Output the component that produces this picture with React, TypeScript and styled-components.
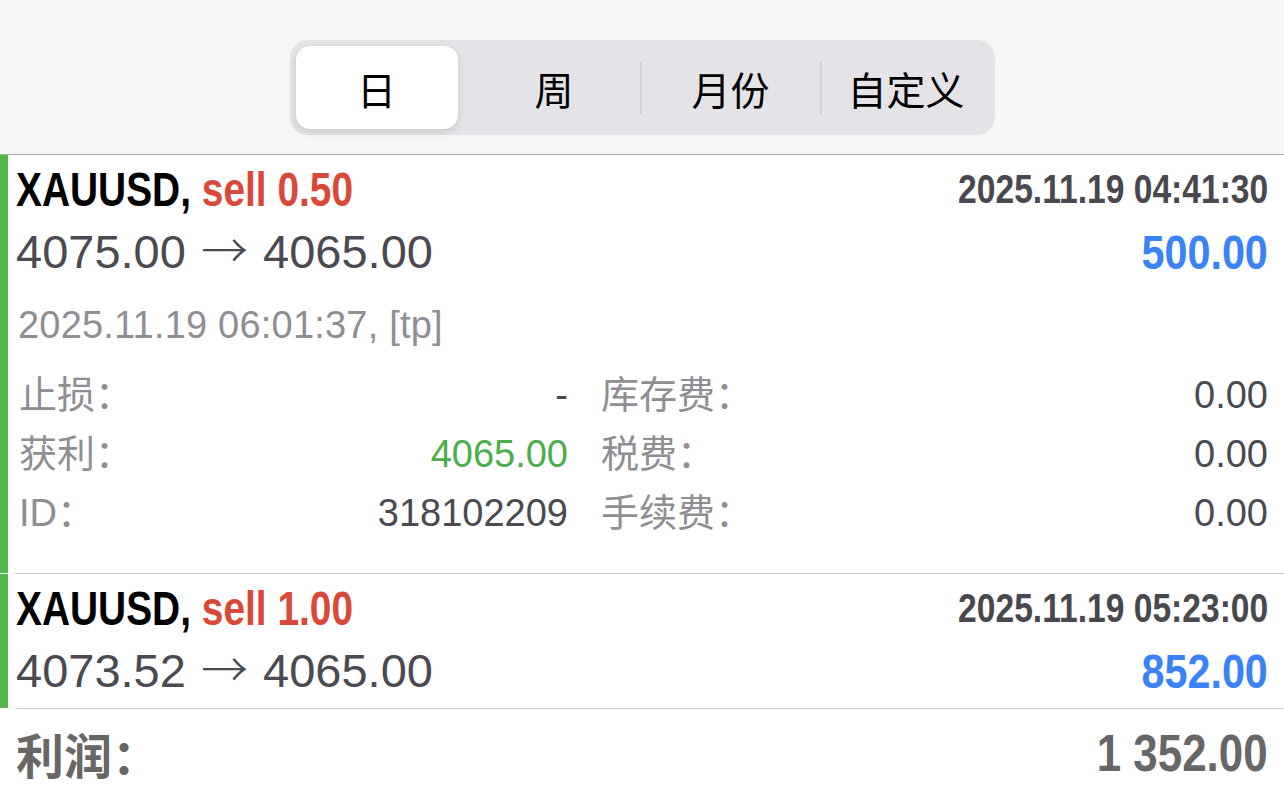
import React from "react";
import styled, { createGlobalStyle } from "styled-components";

const GlobalStyle = createGlobalStyle`
  html, body { margin: 0; padding: 0; background: #ffffff; }
  body {
    font-family: "Liberation Sans", "Noto Sans CJK SC", sans-serif;
    -webkit-font-smoothing: antialiased;
  }
  * { box-sizing: border-box; }
`;

const Page = styled.div`
  width: 1284px;
  height: 797px;
  overflow: hidden;
  background: #ffffff;
`;

const Header = styled.header`
  height: 155px;
  background: #f6f6f6;
  border-bottom: 1px solid #a9a9ab;
  display: flex;
  justify-content: center;
  padding-top: 40px;
`;

const Segmented = styled.div`
  display: flex;
  align-items: center;
  width: 705px;
  height: 95px;
  padding: 6px;
  border-radius: 18px;
  background: #e4e4e8;
`;

const Segment = styled.div<{ $w: number; $active?: boolean; $divider?: boolean }>`
  display: flex;
  align-items: center;
  justify-content: center;
  flex: none;
  width: ${(p) => p.$w}px;
  margin-right: ${(p) => (p.$active ? "11px" : "0")};
  height: ${(p) => (p.$active ? "83px" : "52px")};
  border-left: ${(p) => (p.$divider ? "2px solid #d2d2d6" : "none")};
  border-radius: ${(p) => (p.$active ? "14px" : "0")};
  background: ${(p) => (p.$active ? "#ffffff" : "transparent")};
  box-shadow: ${(p) => (p.$active ? "0 3px 8px rgba(0,0,0,0.12), 0 0 1px rgba(0,0,0,0.08)" : "none")};
  font-family: "Noto Sans CJK SC", sans-serif;
  font-size: 39px;
  color: #000000;
`;

const Card = styled.section`
  display: flex;
  align-items: stretch;
`;

const Bar = styled.div`
  width: 8px;
  flex: none;
  margin-bottom: 1px;
  background: #52b648;
`;

const Body = styled.div`
  flex: 1;
  margin-left: 7px;
  padding: 8px 16px 0 1px;
  border-bottom: 1px solid #c9c9cc;
`;

const Row = styled.div<{ $h: number }>`
  display: flex;
  align-items: center;
  justify-content: space-between;
  height: ${(p) => p.$h}px;
  white-space: nowrap;
`;

/* condensed bold face: the installed fonts have no narrow cut, so squeeze horizontally */
const Squeeze = styled.span<{ $sx: number; $origin: "left" | "right" }>`
  display: inline-block;
  transform: scaleX(${(p) => p.$sx});
  transform-origin: ${(p) => p.$origin} center;
`;

const Title = styled.div`
  font-weight: 700;
  font-size: 48px;
  color: #000000;
`;

const Sell = styled.span`
  color: #d9493a;
`;

const OpenTime = styled.div`
  font-weight: 700;
  font-size: 40px;
  color: #48484e;
`;

const Prices = styled.div`
  font-size: 47px;
  line-height: 54px;
  color: #4a4a50;
`;

const Arrow = styled.span`
  font-family: "Noto Sans CJK SC", sans-serif;
  font-weight: 300;
  line-height: 0;
  margin: 0 2px;
`;

const Profit = styled.div`
  font-weight: 700;
  font-size: 48px;
  color: #3a82f7;
`;

const CloseTime = styled.div`
  font-size: 38px;
  color: #8e8e93;
  padding-left: 2px;
  letter-spacing: 0.2px;
`;

const Details = styled.div`
  display: grid;
  grid-template-columns: 552px 1fr;
  column-gap: 30px;
  margin-top: 4px;
  padding-bottom: 30px;
`;

const Pair = styled.div`
  display: flex;
  align-items: center;
  justify-content: space-between;
  height: 59px;
  padding-left: 3px;
`;

const Label = styled.span`
  font-family: "Liberation Sans", "Noto Sans CJK SC", sans-serif;
  font-size: 38px;
  line-height: 59px;
  color: #8e8e93;
`;

const Value = styled.span<{ $color?: string }>`
  font-size: 38px;
  line-height: 59px;
  color: ${(p) => p.$color || "#4a4a50"};
`;

const Total = styled.div`
  display: flex;
  align-items: center;
  justify-content: space-between;
  height: 88px;
  padding: 0 16px 0 16px;
`;

const TotalLabel = styled.div`
  font-family: "Noto Sans CJK SC", sans-serif;
  font-weight: 700;
  font-size: 48px;
  color: #676767;
`;

const TotalValue = styled.div`
  font-weight: 700;
  font-size: 51px;
  color: #676767;
`;

type Deal = {
  lot: string;
  time: string;
  from: string;
  to: string;
  profit: string;
};

const DealHead: React.FC<{ d: Deal }> = ({ d }) => (
  <>
    <Row $h={52}>
      <Title>
        <Squeeze $sx={0.81} $origin="left">
          XAUUSD, <Sell>sell {d.lot}</Sell>
        </Squeeze>
      </Title>
      <OpenTime>
        <Squeeze $sx={0.84} $origin="right">
          {d.time}
        </Squeeze>
      </OpenTime>
    </Row>
    <Row $h={74}>
      <Prices>
        {d.from} <Arrow>→</Arrow> {d.to}
      </Prices>
      <Profit>
        <Squeeze $sx={0.86} $origin="right">
          {d.profit}
        </Squeeze>
      </Profit>
    </Row>
  </>
);

export default function App() {
  const deals: Deal[] = [
    { lot: "0.50", time: "2025.11.19 04:41:30", from: "4075.00", to: "4065.00", profit: "500.00" },
    { lot: "1.00", time: "2025.11.19 05:23:00", from: "4073.52", to: "4065.00", profit: "852.00" },
  ];
  return (
    <Page>
      <GlobalStyle />
      <Header>
        <Segmented>
          <Segment $w={162} $active>日</Segment>
          <Segment $w={171}>周</Segment>
          <Segment $w={180} $divider>月份</Segment>
          <Segment $w={171} $divider>自定义</Segment>
        </Segmented>
      </Header>

      <Card>
        <Bar />
        <Body>
          <DealHead d={deals[0]} />
          <Row $h={73}>
            <CloseTime>2025.11.19 06:01:37, [tp]</CloseTime>
          </Row>
          <Details>
            <Pair>
              <Label>止损：</Label>
              <Value>-</Value>
            </Pair>
            <Pair>
              <Label>库存费：</Label>
              <Value>0.00</Value>
            </Pair>
            <Pair>
              <Label>获利：</Label>
              <Value $color="#4aae4a">4065.00</Value>
            </Pair>
            <Pair>
              <Label>税费：</Label>
              <Value>0.00</Value>
            </Pair>
            <Pair>
              <Label>ID：</Label>
              <Value>318102209</Value>
            </Pair>
            <Pair>
              <Label>手续费：</Label>
              <Value>0.00</Value>
            </Pair>
          </Details>
        </Body>
      </Card>

      <Card>
        <Bar />
        <Body>
          <DealHead d={deals[1]} />
        </Body>
      </Card>

      <Total>
        <TotalLabel>利润：</TotalLabel>
        <TotalValue>
          <Squeeze $sx={0.86} $origin="right">
            1 352.00
          </Squeeze>
        </TotalValue>
      </Total>
    </Page>
  );
}
